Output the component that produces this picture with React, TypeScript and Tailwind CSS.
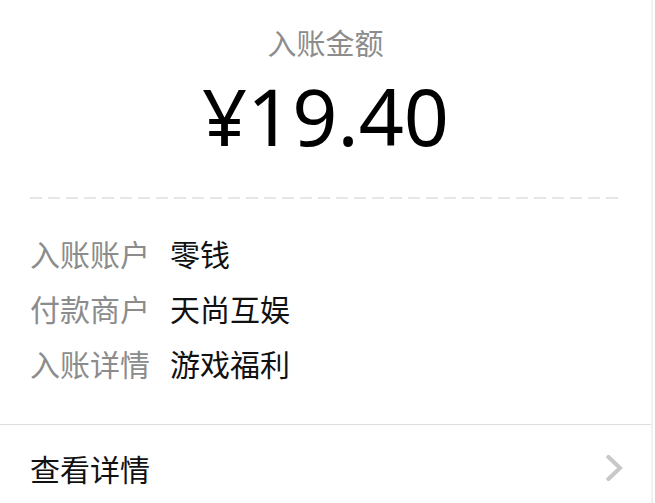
import React from 'react';

const rows = [
  { label: '入账账户', value: '零钱' },
  { label: '付款商户', value: '天尚互娱' },
  { label: '入账详情', value: '游戏福利' },
];

const cjk = { fontFamily: '"Noto Sans CJK SC", "Noto Sans", sans-serif' };

export default function App() {
  return (
    <div className="w-[655px] h-[503px] bg-white overflow-hidden" style={cjk}>
      <div className="w-[653px] h-full border-r-2 border-[#f1f1f1] flex flex-col">
        {/* amount header */}
        <div className="flex flex-col items-center pt-[22px]">
          <div className="text-[29px] leading-[40px] text-[#8c8c8c]">入账金额</div>
          <div
            className="text-[79px] leading-[80px] text-black mt-[14px]"
            style={{ fontFamily: '"Noto Sans", "Noto Sans CJK SC", sans-serif' }}
          >
            ¥19.40
          </div>
        </div>

        <div className="mx-[30px] mt-[41px] h-[2px] bg-[repeating-linear-gradient(90deg,#e7e7e7_0_12px,transparent_12px_18px)]" />

        {/* info rows */}
        <div className="flex flex-col pt-[34px] pl-[30px] gap-[15px]">
          {rows.map((r) => (
            <div key={r.label} className="flex items-center h-[40px] text-[30px] leading-[40px]">
              <span className="w-[140px] text-[#8c8c8c]">{r.label}</span>
              <span className="text-[#111111]">{r.value}</span>
            </div>
          ))}
        </div>

        <div className="mt-[41px] h-px bg-[#dedede]" />

        <div className="flex items-center justify-between pl-[30px] pr-[27px] pt-[8px] h-[90px]">
          <span className="text-[30px] leading-[40px] text-[#111111]">查看详情</span>
          <svg width="18" height="26" viewBox="0 0 18 26">
            <polyline
              points="2.5,2 14,13 2.5,24"
              fill="none"
              stroke="#c8c8c8"
              strokeWidth="4"
              strokeLinecap="square"
              strokeLinejoin="miter"
            />
          </svg>
        </div>
      </div>
    </div>
  );
}
